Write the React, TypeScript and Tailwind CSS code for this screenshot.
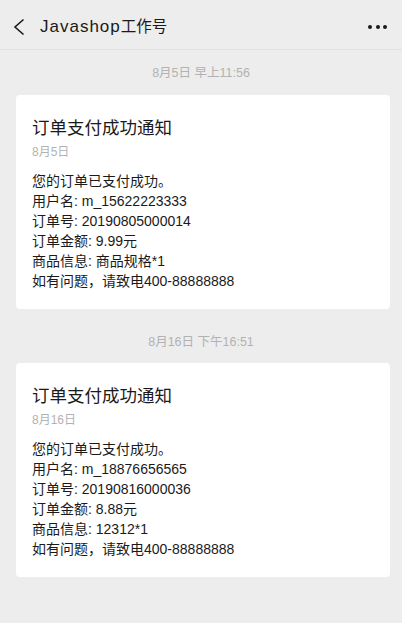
import React from "react";

const font = '"Liberation Sans", "Noto Sans CJK SC", sans-serif';

type Msg = {
  time: string;
  date: string;
  lines: string[];
};

const msgs: Msg[] = [
  {
    time: "8月5日 早上11:56",
    date: "8月5日",
    lines: [
      "您的订单已支付成功。",
      "用户名: m_15622223333",
      "订单号: 20190805000014",
      "订单金额: 9.99元",
      "商品信息: 商品规格*1",
      "如有问题，请致电400-88888888",
    ],
  },
  {
    time: "8月16日 下午16:51",
    date: "8月16日",
    lines: [
      "您的订单已支付成功。",
      "用户名: m_18876656565",
      "订单号: 20190816000036",
      "订单金额: 8.88元",
      "商品信息: 12312*1",
      "如有问题，请致电400-88888888",
    ],
  },
];

function Card({ m }: { m: Msg }) {
  return (
    <div className="ml-4 mr-3 rounded-[4px] bg-white px-4 pt-[21px] pb-[18px]">
      <div className="text-[17.5px] leading-[24px] text-[#1a1a1a]">订单支付成功通知</div>
      <div className="mt-1 text-[12px] leading-[16px] text-[#b2b2b2]">{m.date}</div>
      <div className="mt-[11px] text-[14px] leading-[20px] text-[#1a1a1a]">
        {m.lines.map((l, i) => (
          <div key={i}>{l}</div>
        ))}
      </div>
    </div>
  );
}

export default function App() {
  return (
    <div className="min-h-[623px] w-full bg-[#ededed]" style={{ fontFamily: font }}>
      <div className="flex h-[50px] items-center border-b border-[#e2e2e2] pt-[4px] pl-3 pr-[15px]">
        <svg width="14" height="18" viewBox="0 0 14 18" className="shrink-0">
          <path d="M11.5 1.5 L3 9 L11.5 16.5" fill="none" stroke="#1a1a1a" strokeWidth="1.6" />
        </svg>
        <div className="ml-[14px] flex items-baseline text-[#1a1a1a]">
          <span className="text-[17px] tracking-[1px]">Javashop</span>
          <span className="text-[15.5px]">工作号</span>
        </div>
        <div className="ml-auto flex items-center gap-[3.3px]">
          <span className="h-[4px] w-[4px] rounded-full bg-[#1a1a1a]" />
          <span className="h-[4px] w-[4px] rounded-full bg-[#1a1a1a]" />
          <span className="h-[4px] w-[4px] rounded-full bg-[#1a1a1a]" />
        </div>
      </div>
      <div className="pb-10">
        {msgs.map((m, i) => (
          <div key={i}>
            <div
              className={
                i === 0
                  ? "mt-[15px] mb-[14px] text-center text-[12.5px] leading-[16px] text-[#b2b2b2]"
                  : "mt-[25px] mb-[13px] text-center text-[12.5px] leading-[16px] text-[#b2b2b2]"
              }
            >
              {m.time}
            </div>
            <Card m={m} />
          </div>
        ))}
      </div>
    </div>
  );
}
